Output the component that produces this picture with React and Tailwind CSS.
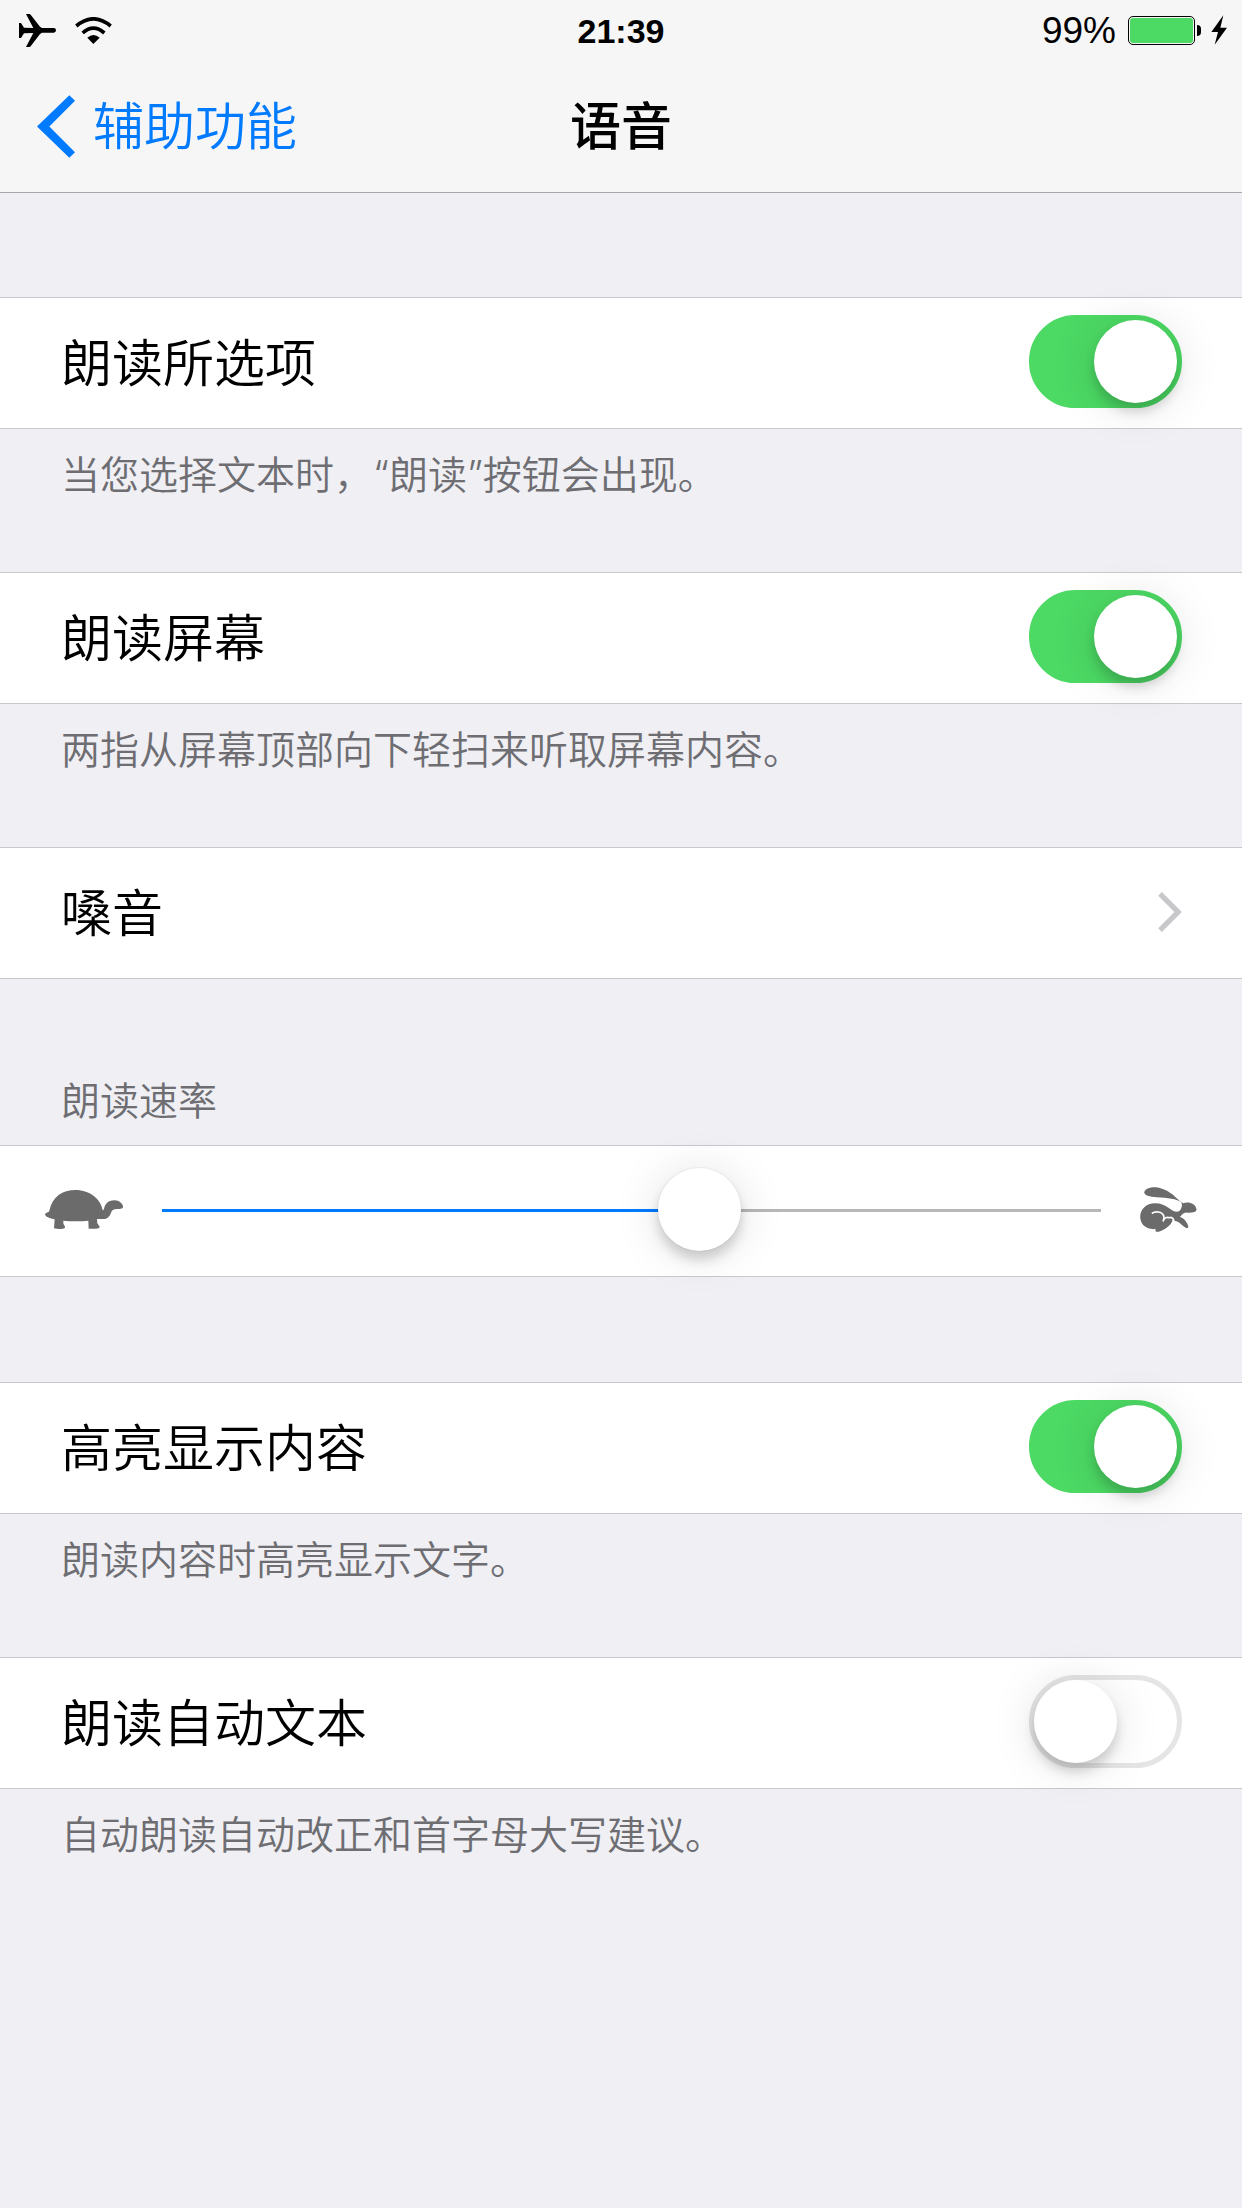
import React, { useState } from 'react';

const PlaneIcon = () => (
  <svg viewBox="0 0 111 99" className="w-[37px] h-[33px]" aria-hidden="true">
    <path d="M0 27H6L15 41L43 42L21 0H31Q33 0 35 2L63 38L69 42H104Q111 42 111 49Q111 56 104 56H69L63 60L35 97Q33 99 31 99H21L43 57L15 58L6 72H0Z" />
  </svg>
);

const WifiIcon = () => (
  <svg viewBox="0 0 111 81" className="w-[37px] h-[27px]" aria-hidden="true">
    <path d="M4 27Q55 -16 107 27M23 48Q55 19 88 48" fill="none" stroke="black" strokeWidth="11" />
    <path d="M37 62Q55 46 74 62L55 81Z" />
  </svg>
);

const BoltIcon = () => (
  <svg viewBox="0 0 48 88" className="w-4 h-[30px]" aria-hidden="true">
    <path d="M37 0L1 50H21L11 88L48 37H28Z" />
  </svg>
);

const BackIcon = () => (
  <svg viewBox="0 0 114 188" className="w-[38px] h-[63px]" fill="currentColor" aria-hidden="true">
    <path d="M97 0L114 17L37 94L114 171L97 188L0 94Z" />
  </svg>
);

const ChevronIcon = () => (
  <svg viewBox="0 0 70 118" className="w-6 h-10 text-[#c7c7cc]" fill="currentColor" aria-hidden="true">
    <path d="M11 0L70 59L11 118L0 107L48 59L0 11Z" />
  </svg>
);

const TurtleIcon = () => (
  <svg viewBox="0 0 234 117" className="w-[78px] h-[39px] shrink-0" fill="#6b6b6b" aria-hidden="true">
    <path d="M13 62C22 20 52 0 92 0C135 0 168 28 173 61C178 61 177 51 181 45C187 35 197 31 209 31C223 31 234 42 234 50C234 56 226 57 216 57C205 57 200 62 198 68C194 80 186 87 174 87H156L157 100C160 106 164 108 164 112C162 117 148 117 131 116L130 92C110 94 75 94 55 92L55 100C56 106 61 108 60 113C56 117 40 118 27 115L29 88C15 86 0 80 0 73C2 66 11 69 13 62Z" />
  </svg>
);

const RabbitIcon = () => (
  <svg viewBox="0 0 171 136" className="w-[57px] h-[45px] shrink-0" aria-hidden="true">
    <path
      fill="#6b6b6b"
      d="M12 16C14 6 30 0 48 1C72 4 95 18 110 34C118 41 124 46 130 49C140 45 153 47 160 52C168 57 172 66 169 72C164 78 150 79 138 77C131 78 125 84 120 91C129 93 137 101 142 110C146 117 146 122 143 124C139 126 132 120 126 115C118 108 112 103 103 103L97 98C98 106 93 112 87 117C78 125 66 133 56 135C48 137 44 133 47 127C20 130 0 114 0 91C0 67 18 49 45 49C62 49 76 55 90 66C100 74 111 78 119 72C126 65 128 53 124 46C112 36 82 33 50 31C28 30 13 26 12 16Z"
    />
    <path d="M35 80C46 72 66 74 71 87C73 93 71 100 69 104C72 94 80 89 88 93C94 90 101 94 102 103" fill="none" stroke="white" strokeWidth="5" />
  </svg>
);

const StatusBar = () => (
  <div className="grid grid-cols-3 items-center h-[60px] px-[15px]">
    <div className="flex items-center gap-[19px] pl-1">
      <PlaneIcon />
      <WifiIcon />
    </div>
    <time className="pt-0.5 text-center text-[34px] font-bold">21:39</time>
    <div className="flex items-center justify-end">
      <span className="text-[37px] pt-0.5 mr-3">99%</span>
      <div className="w-[67px] h-[29px] border border-black rounded-[5px] p-px">
        <div className="h-full rounded-[3px] bg-[#4cd964]" />
      </div>
      <div className="w-1 h-[11px] ml-0.5 mr-2.5 rounded-r-full bg-black" />
      <BoltIcon />
    </div>
  </div>
);

const NavBar = ({ back, title }) => (
  <nav className="grid grid-cols-3 items-center h-[132px] px-[37px] text-[51px]">
    <a href="#accessibility" className="flex items-center gap-[18px] text-[#007aff] font-[350] whitespace-nowrap">
      <BackIcon />
      <span className="pt-1">{back}</span>
    </a>
    <h1 className="pt-1 text-center font-medium">{title}</h1>
  </nav>
);

const Row = ({ as: Tag = 'label', className = 'pl-[61px] pr-[60px]', children }) => (
  <Tag className={`flex items-center justify-between w-full h-[132px] pb-[3px] border-y border-[#c8c7cc] bg-white text-[51px] font-[350] ${className}`}>
    {children}
  </Tag>
);

const Note = ({ children }) => (
  <p className="pt-5 pb-[71px] px-[61px] text-[39px] leading-[52px] font-[350] text-[#6d6d72] font-['Inter','Noto_Sans_CJK_SC',sans-serif]">
    {children}
  </p>
);

const SwitchRow = ({ label, defaultOn = false }) => {
  const [on, setOn] = useState(defaultOn);

  return (
    <Row>
      <span className="pt-2">{label}</span>
      <input
        type="checkbox"
        role="switch"
        checked={on}
        onChange={(e) => setOn(e.target.checked)}
        className="appearance-none shrink-0 w-[153px] h-[93px] rounded-full border-5 border-[#e5e5e5] bg-white cursor-pointer checked:border-[#4cd964] checked:bg-[#4cd964] before:block before:size-[83px] before:rounded-full before:bg-white before:shadow-[0_9px_12px_rgba(0,0,0,0.16),0_3px_48px_rgba(0,0,0,0.12)] checked:before:ml-[60px]"
      />
    </Row>
  );
};

const RateSlider = () => {
  const [rate, setRate] = useState(58);

  return (
    <Row as="div" className="px-[45px] gap-[39px]">
      <TurtleIcon />
      <input
        type="range"
        aria-labelledby="rate-title"
        value={rate}
        onChange={(e) => setRate(Number(e.target.value))}
        style={{ backgroundImage: `linear-gradient(to right, #007aff ${rate}%, #b7b7b7 ${rate}%)` }}
        className="appearance-none flex-1 min-w-0 h-[83px] bg-no-repeat bg-[position:0_41px] bg-[length:100%_3px] cursor-pointer [&::-webkit-slider-thumb]:appearance-none [&::-webkit-slider-thumb]:size-[83px] [&::-webkit-slider-thumb]:rounded-full [&::-webkit-slider-thumb]:bg-white [&::-webkit-slider-thumb]:shadow-[0_0_0_1px_rgba(0,0,0,0.04),0_9px_12px_rgba(0,0,0,0.16),0_3px_48px_rgba(0,0,0,0.12)]"
      />
      <RabbitIcon />
    </Row>
  );
};

const App = () => (
  <div className="min-h-screen bg-[#efeff4] text-black font-['Liberation_Sans','Noto_Sans_CJK_SC',sans-serif]">
    <header className="bg-[#f6f6f6] border-b border-[#a7a7aa]">
      <StatusBar />
      <NavBar back="辅助功能" title="语音" />
    </header>

    <main className="pt-[104px]">
      <SwitchRow label="朗读所选项" defaultOn />
      <Note>当您选择文本时，“朗读”按钮会出现。</Note>

      <SwitchRow label="朗读屏幕" defaultOn />
      <Note>两指从屏幕顶部向下轻扫来听取屏幕内容。</Note>

      <Row as="button">
        <span className="pt-2">嗓音</span>
        <ChevronIcon />
      </Row>

      <h2
        id="rate-title"
        className="pt-24 pb-[18px] px-[61px] text-[39px] leading-[52px] font-[350] text-[#6d6d72] font-['Inter','Noto_Sans_CJK_SC',sans-serif]"
      >
        朗读速率
      </h2>
      <RateSlider />

      <div className="pt-[105px]">
        <SwitchRow label="高亮显示内容" defaultOn />
        <Note>朗读内容时高亮显示文字。</Note>
      </div>

      <SwitchRow label="朗读自动文本" />
      <Note>自动朗读自动改正和首字母大写建议。</Note>
    </main>
  </div>
);

export default App;
